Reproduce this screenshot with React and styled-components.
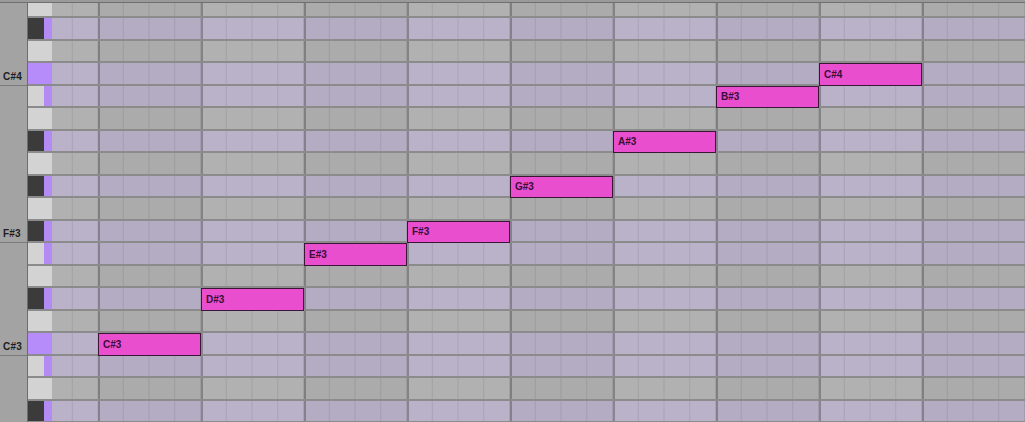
import React from 'react'
import styled, { createGlobalStyle } from 'styled-components'

const GlobalStyle = createGlobalStyle`
  body {
    margin: 0;
    background: #a3a3a3;
    font-family: "Liberation Sans", Arial, sans-serif;
  }
`

// pitches from top to bottom, as they scroll in the editor
const PITCHES = [
  'E4', 'D#4', 'D4', 'C#4', 'C4', 'B3', 'A#3', 'A3', 'G#3', 'G3',
  'F#3', 'F3', 'E3', 'D#3', 'D3', 'C#3', 'C3', 'B2', 'A#2',
]

// C# major
const SCALE = ['C#', 'D#', 'F', 'F#', 'G#', 'A#', 'C']
const ROOT = 'C#'
const LABELED = ['C#4', 'F#3', 'C#3']

const NOTES = [
  { pitch: 'C#3', beat: 0, name: 'C#3' },
  { pitch: 'D#3', beat: 1, name: 'D#3' },
  { pitch: 'F3', beat: 2, name: 'E#3' },
  { pitch: 'F#3', beat: 3, name: 'F#3' },
  { pitch: 'G#3', beat: 4, name: 'G#3' },
  { pitch: 'A#3', beat: 5, name: 'A#3' },
  { pitch: 'C4', beat: 6, name: 'B#3' },
  { pitch: 'C#4', beat: 7, name: 'C#4' },
]

const BEATS = 9

const pitchClass = (p) => p.replace(/\d+$/, '')

const PianoRoll = () => {
  return (
    <Editor>
      <TopStrip />
      <Viewport>
        <Lanes>
          {PITCHES.map((pitch) => {
            const pc = pitchClass(pitch)
            const black = pc.includes('#')
            const inScale = SCALE.includes(pc)
            const root = pc === ROOT
            const labeled = LABELED.includes(pitch)
            const notes = NOTES.filter((n) => n.pitch === pitch)
            return (
              <Lane key={pitch}>
                <LabelCell $marked={labeled}>{labeled ? pitch : ''}</LabelCell>
                <Track>
                  <Key $black={black} $root={root}>
                    <KeyBody />
                    <KeyStrip $on={inScale} $root={root} />
                  </Key>
                  <Bars $inScale={inScale}>
                    <Lead />
                    {Array.from({ length: BEATS }).map((_, i) => (
                      <Beat key={i} $col={i + 2} $dim={i % 2 === 0} />
                    ))}
                    {notes.map((n) => (
                      <Note key={n.name} $col={n.beat + 2}>{n.name}</Note>
                    ))}
                  </Bars>
                </Track>
              </Lane>
            )
          })}
        </Lanes>
      </Viewport>
    </Editor>
  )
}

const Editor = styled.div`
  width: 1025px;
  height: 422px;
  display: flex;
  flex-direction: column;
  overflow: hidden;
  background: #a3a3a3;
`

const TopStrip = styled.div`
  height: 2px;
  flex-shrink: 0;
  background: #9a9a9a;
  border-bottom: 1px solid #6f6f6f;
`

const Viewport = styled.div`
  flex: 1;
  overflow: hidden;
`

const Lanes = styled.div`
  display: flex;
  flex-direction: column;
  margin-top: -7.5px;
`

const Lane = styled.div`
  display: flex;
  height: 22.5px;
  flex-shrink: 0;
`

const LabelCell = styled.div`
  width: 28px;
  flex-shrink: 0;
  box-sizing: border-box;
  background: #a3a3a3;
  border-right: 1px solid #6d6d6d;
  border-bottom: ${(p) => (p.$marked ? '1px solid #7a7a7a' : 'none')};
  display: flex;
  align-items: flex-end;
  padding: 0 0 3px 3px;
  font-size: 10px;
  font-weight: bold;
  color: #1d1d1d;
  letter-spacing: 0.2px;
`

const Track = styled.div`
  flex: 1;
  display: flex;
  border-bottom: 2px solid #8b8b8b;
`

const Key = styled.div`
  width: 24px;
  flex-shrink: 0;
  display: flex;
  background: ${(p) => (p.$root ? '#b58cfa' : p.$black ? '#3b3b3b' : '#d3d3d3')};
`

const KeyBody = styled.div`
  width: 16px;
`

const KeyStrip = styled.div`
  width: 8px;
  background: ${(p) => (p.$root ? 'transparent' : p.$on ? '#b38bf5' : '#d3d3d3')};
`

const Bars = styled.div`
  flex: 1;
  display: grid;
  grid-template-columns: 46px repeat(${BEATS}, 103px);
  grid-template-rows: 100%;
  background: ${(p) => (p.$inScale ? '#bab2c9' : '#b1b1b1')};
`

const Lead = styled.div`
  grid-row: 1;
  grid-column: 1;
  background-image: linear-gradient(90deg, transparent 24.75px, rgba(0, 0, 0, 0.09) 24.75px);
  background-size: 25.75px 100%;
  background-repeat: repeat-x;
  background-position: -5px 0;
`

const Beat = styled.div`
  grid-row: 1;
  grid-column: ${(p) => p.$col};
  box-sizing: border-box;
  border-left: 2px solid rgba(50, 50, 50, 0.36);
  background-color: ${(p) => (p.$dim ? 'rgba(0, 0, 0, 0.03)' : 'transparent')};
  background-image: linear-gradient(90deg, transparent 24.75px, rgba(0, 0, 0, 0.09) 24.75px);
  background-size: 25.75px 100%;
  background-repeat: repeat-x;
  background-origin: border-box;
`

const Note = styled.div`
  grid-row: 1;
  grid-column: ${(p) => p.$col};
  position: relative;
  z-index: 1;
  height: calc(100% + 2px);
  box-sizing: border-box;
  background: #e94ecf;
  border: 1.5px solid #3a1734;
  display: flex;
  align-items: center;
  padding-left: 4px;
  font-size: 10px;
  font-weight: bold;
  color: #3a0f35;
`

const App = () => (
  <>
    <GlobalStyle />
    <PianoRoll />
  </>
)

export default App
